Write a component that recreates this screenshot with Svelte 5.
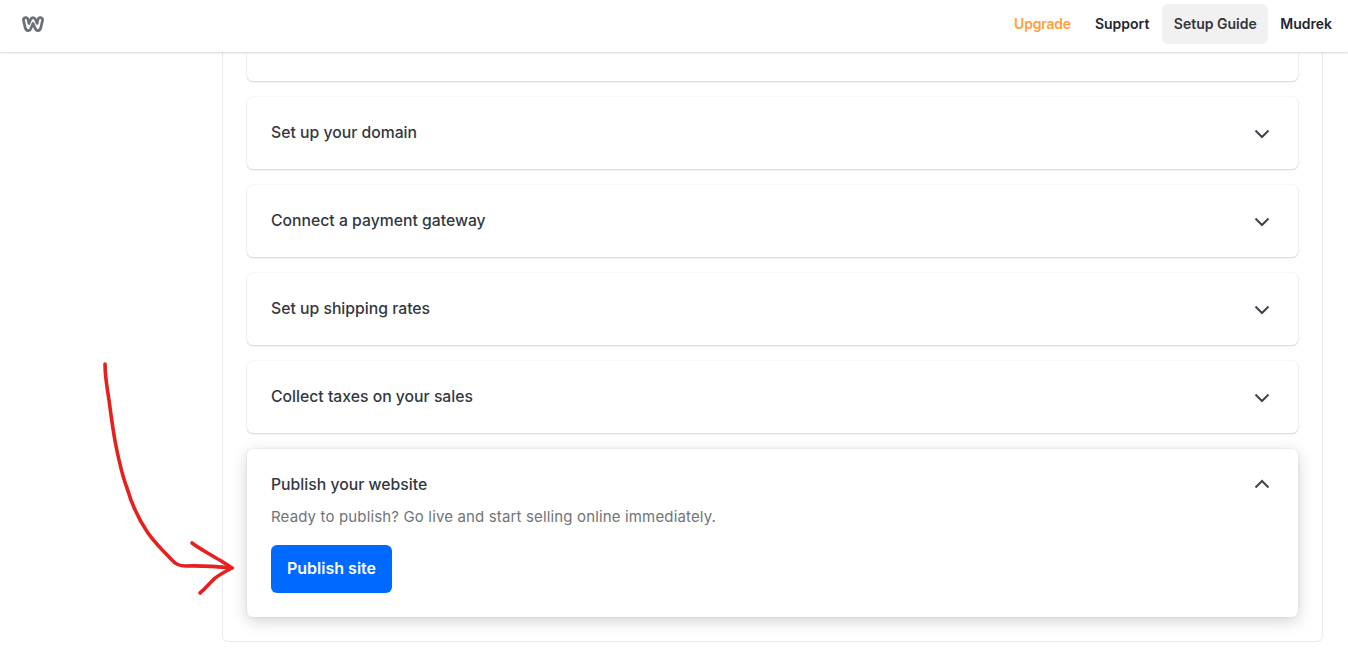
<script lang="ts">
  type Step = { title: string; open?: boolean; text?: string };

  const steps: Step[] = [
    { title: "Set up your domain" },
    { title: "Connect a payment gateway" },
    { title: "Set up shipping rates" },
    { title: "Collect taxes on your sales" },
    {
      title: "Publish your website",
      open: true,
      text: "Ready to publish? Go live and start selling online immediately.",
    },
  ];
</script>

<header class="topbar">
  <svg class="logo" viewBox="0 0 22 16" width="22" height="16" aria-hidden="true">
    <path
      d="M3.8 1.6C2.2 1.6 1.1 2.8 1.5 4.4L3.1 11.4C3.5 13.2 4.5 14.6 6.1 14.6C7.6 14.6 8.5 13.4 9.1 11.9L11 7.4L12.9 11.9C13.5 13.4 14.4 14.6 15.9 14.6C17.5 14.6 18.5 13.2 18.9 11.4L20.5 4.4C20.9 2.8 19.8 1.6 18.2 1.6C16.6 1.6 16.1 2.7 15.8 4.1L15.1 7.5L13.5 3.6C12.9 2.2 12.2 1.6 11 1.6C9.8 1.6 9.1 2.2 8.5 3.6L6.9 7.5L6.2 4.1C5.9 2.7 5.4 1.6 3.8 1.6Z"
      fill="none"
      stroke="#6b7078"
      stroke-width="2.7"
      stroke-linejoin="round"
    />
  </svg>
  <nav class="nav">
    <span class="nav-item upgrade">Upgrade</span>
    <span class="nav-item support">Support</span>
    <span class="nav-item active">Setup Guide</span>
    <span class="nav-item">Mudrek</span>
  </nav>
</header>

<main class="page">
  <section class="panel">
    <div class="card stub"></div>
    {#each steps as step}
      <div class="card" class:open={step.open}>
        <div class="card-head">
          <h3>{step.title}</h3>
          <svg class="chevron" viewBox="0 0 16 10" width="16" height="10" aria-hidden="true">
            {#if step.open}
              <path d="M1.5 8.5L8 2L14.5 8.5" />
            {:else}
              <path d="M1.5 1.5L8 8L14.5 1.5" />
            {/if}
          </svg>
        </div>
        {#if step.open}
          <p>{step.text}</p>
          <button type="button">Publish site</button>
        {/if}
      </div>
    {/each}
  </section>
</main>

<!-- hand drawn annotation on top of the page -->
<svg class="arrow" viewBox="0 0 1348 658" width="1348" height="658" aria-hidden="true">
  <path d="M105 364C105 376 107 388 109 400C111 415 113 431 116 446C119 461 122 475 127 488C132 505 139 520 148 533C155 543 164 552 172 560C175 564 179 566 186 566C200 565.500 217 566.500 232 568" />
  <path d="M192 543C200 549 208 553 216 558C222 561 227 565 232 568C226 571 220 574 214 579C209 584 205 589 200 593" />
</svg>

<style>
  :global(body) {
    margin: 0;
    background: #fff;
    font-family: Inter, "Liberation Sans", sans-serif;
    overflow: hidden;
  }

  .topbar {
    height: 52px;
    box-sizing: border-box;
    display: flex;
    align-items: center;
    justify-content: space-between;
    padding: 0 4px 4px 22px;
    background: #fff;
    box-shadow: 0 1px 2px rgba(0, 0, 0, 0.16);
    position: relative;
    z-index: 2;
  }

  .nav {
    display: flex;
    align-items: center;
  }

  .nav-item {
    height: 40px;
    box-sizing: border-box;
    display: flex;
    align-items: center;
    padding: 0 12px 1px;
    font-size: 14px;
    font-weight: 600;
    color: #1f2630;
    border-radius: 6px;
  }

  .upgrade {
    color: #ff9f40;
    letter-spacing: -0.2px;
  }

  .support {
    margin-right: 1px;
  }

  .active {
    background: #f1f1f1;
    color: #33363b;
    padding: 0 11.5px 1px;
  }

  .page {
    padding-left: 222px;
    padding-right: 25px;
    height: 606px;
    overflow: hidden;
  }

  .panel {
    height: 589px;
    display: flex;
    flex-direction: column;
    gap: 16px;
    padding: 0 24px;
    border: 1px solid #ebebeb;
    border-top: none;
    border-radius: 0 0 6px 6px;
  }

  .card {
    min-height: 72px;
    box-sizing: border-box;
    padding: 23px 24px 25px;
    background: #fff;
    border-radius: 6px;
    box-shadow: 0 0 2px rgba(0, 0, 0, 0.1), 0 1px 2px rgba(0, 0, 0, 0.14);
  }

  .stub {
    min-height: 29px;
    height: 29px;
    padding: 0;
    border-radius: 0 0 6px 6px;
  }

  .open {
    height: 168px;
    box-shadow: 0 0 3px rgba(0, 0, 0, 0.08), 0 4px 16px rgba(0, 0, 0, 0.18);
  }

  .card-head {
    display: flex;
    align-items: center;
    justify-content: space-between;
    height: 24px;
  }

  h3 {
    margin: 0;
    font-size: 15.75px;
    font-weight: 500;
    color: #33383f;
  }

  .chevron {
    margin-right: 4px;
    margin-top: 3px;
  }

  .open .chevron {
    margin-top: -1px;
  }

  .chevron path {
    fill: none;
    stroke: #3d4450;
    stroke-width: 2;
  }

  p {
    margin: 9px 0 16px;
    font-size: 15px;
    letter-spacing: 0.15px;
    line-height: 24px;
    color: #6f7479;
  }

  button {
    height: 48px;
    padding: 0 16px 2px;
    border: none;
    border-radius: 6px;
    background: #0069ff;
    color: #fff;
    font-family: inherit;
    font-size: 16px;
    font-weight: 600;
  }

  .arrow {
    position: absolute;
    top: 0;
    left: 0;
    z-index: 3;
    pointer-events: none;
  }

  .arrow path {
    fill: none;
    stroke: #e5201f;
    stroke-width: 3.6;
    stroke-linecap: round;
    stroke-linejoin: round;
  }
</style>
